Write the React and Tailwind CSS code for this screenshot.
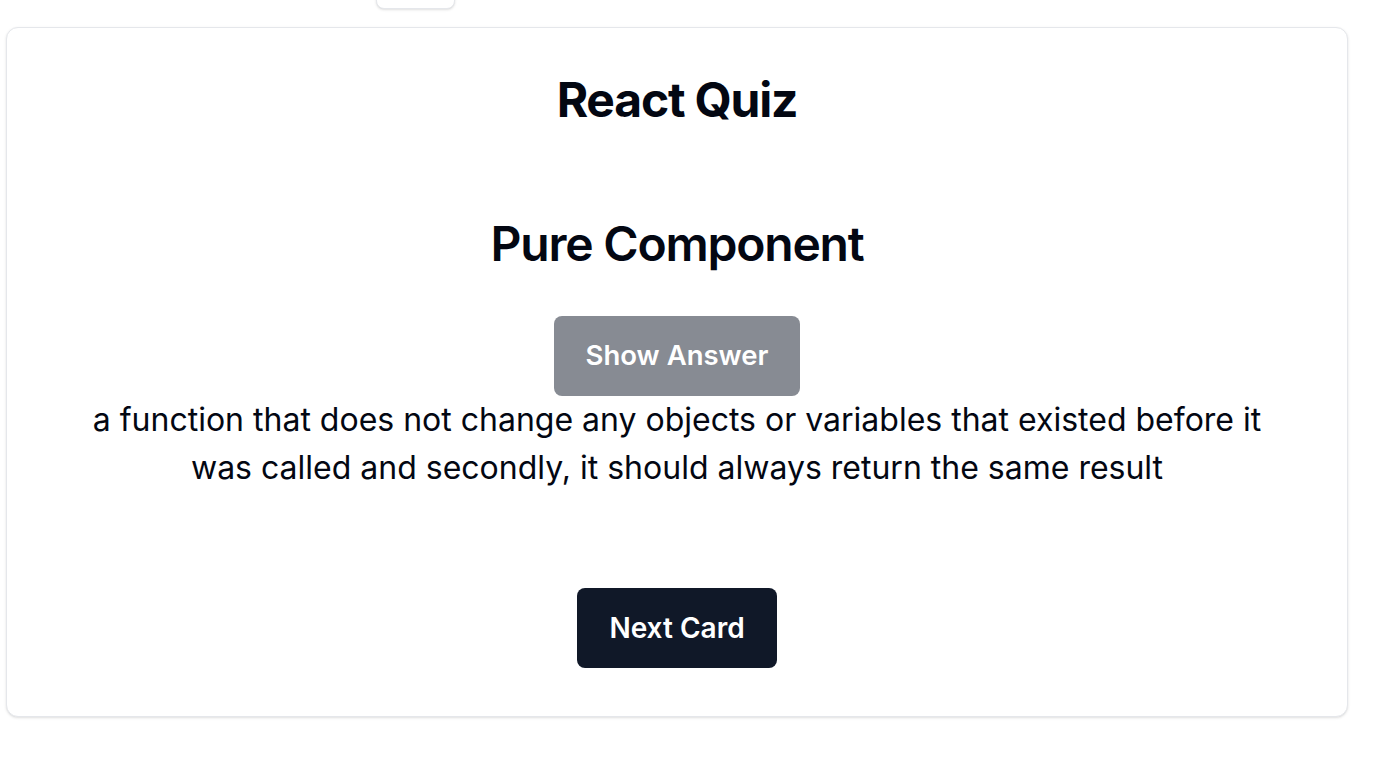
import React, { useState } from "react";

const App = () => {
  const [showAnswer, setShowAnswer] = useState(true);

  return (
    <div className="min-h-screen bg-white font-['Inter',sans-serif] text-gray-950">
      <div className="flex flex-col pl-[6px] pr-[50px]">
        {/* toolbar button, scrolled mostly out of view */}
        <div className="-mt-[30px] ml-[370px] h-[39px] w-[79px] rounded-lg border border-gray-200 bg-white shadow-sm"></div>

        {/* Quiz card */}
        <div className="mt-[18px] flex flex-col items-center rounded-xl border border-gray-200 bg-white px-16 pt-[48px] pb-[48px] shadow-sm">
          <h1 className="text-[48px] leading-[48px] font-bold tracking-tight">
            React Quiz
          </h1>
          <h2 className="mt-[96px] text-[48px] leading-[48px] font-semibold tracking-tight">
            Pure Component
          </h2>
          <button
            onClick={() => setShowAnswer(!showAnswer)}
            className="mt-[48px] h-20 rounded-lg bg-gray-900/50 px-8 text-[27.5px] font-semibold text-white"
          >
            Show Answer
          </button>
          {showAnswer && (
            <p className="text-center text-[32px] leading-[48px] text-gray-950">
              a function that does not change any objects or variables that
              existed before it was called and secondly, it should always
              return the same result
            </p>
          )}
          <button className="mt-[96px] h-20 rounded-lg bg-gray-900 px-8 text-[28px] font-semibold text-white">
            Next Card
          </button>
        </div>
      </div>
    </div>
  );
};

export default App;
